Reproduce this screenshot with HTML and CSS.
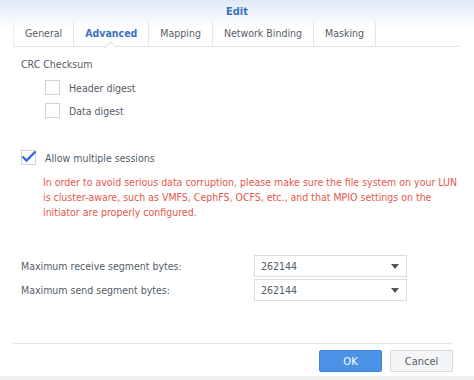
FILE: index.html
```html
<!DOCTYPE html>
<html lang="en">
<head>
    <meta charset="UTF-8">
    <title>Edit</title>
    <link rel="stylesheet" href="styles.css">
</head>
<body>
    <div class="dialog">
        <div class="header">
            <div class="title">Edit</div>
            <div class="tabs">
                <div class="tab">General</div>
                <div class="tab active">Advanced</div>
                <div class="tab">Mapping</div>
                <div class="tab">Network Binding</div>
                <div class="tab">Masking</div>
            </div>
        </div>

        <div class="content">
            <div class="section-label">CRC Checksum</div>
            <label class="check indent"><span class="box"></span>Header digest</label>
            <label class="check indent"><span class="box"></span>Data digest</label>

            <label class="check sessions">
                <span class="box checked">
                    <svg width="16" height="13" viewBox="0 0 16 13"><path d="M1.5 6.5 L5.5 10.5 L14.5 1.5" fill="none" stroke="#2f6fd0" stroke-width="2.4"/></svg>
                </span>Allow multiple sessions
            </label>
            <p class="warning">In order to avoid serious data corruption, please make sure the file system on your LUN is cluster-aware, such as VMFS, CephFS, OCFS, etc., and that MPIO settings on the initiator are properly configured.</p>

            <div class="fields">
                <div class="field">
                    <span class="field-label">Maximum receive segment bytes:</span>
                    <div class="select">262144<span class="arrow"></span></div>
                </div>
                <div class="field">
                    <span class="field-label">Maximum send segment bytes:</span>
                    <div class="select">262144<span class="arrow"></span></div>
                </div>
            </div>
        </div>

        <div class="footer">
            <button class="btn btn-ok">OK</button>
            <button class="btn btn-cancel">Cancel</button>
        </div>
    </div>
</body>
</html>
```

FILE: styles.css
```css
body {
    margin: 0;
    font-family: 'DejaVu Sans Condensed', 'DejaVu Sans', sans-serif;
    font-size: 10.5px;
    color: #535d68;
    background-color: #ffffff;
}

.dialog {
    width: 474px;
    height: 380px;
    display: flex;
    flex-direction: column;
    background-color: #fff;
    border-bottom: 4px solid #eef0f2;
    box-sizing: border-box;
}

.header {
    background: linear-gradient(#dfe9f5, #ffffff 60%);
    padding-top: 5px;
}

.title {
    text-align: center;
    color: #3b70c2;
    font-weight: bold;
    font-size: 11px;
    height: 17px;
}

.tabs {
    display: flex;
    margin: 0 14px 0 13px;
    height: 24px;
    border-bottom: 1px solid #dde3ea;
    border-left: 1px solid #e8ecf0;
}

.tab {
    position: relative;
    padding: 0 11px;
    line-height: 23px;
    border-right: 1px solid #e3e7ec;
    color: #555e68;
}

.tab.active {
    color: #3b70c2;
    font-weight: bold;
}

/* little notch under the active tab */
.tab.active::after {
    content: "";
    position: absolute;
    left: 50%;
    bottom: -1px;
    margin-left: -5px;
    width: 8px;
    height: 8px;
    background: #fff;
    border-left: 1px solid #dde3ea;
    border-top: 1px solid #dde3ea;
    transform: translateY(5px) rotate(45deg);
}

.content {
    flex: 1;
    padding: 11px 16px 0 21px;
}

.section-label {
    height: 18px;
}

.check {
    display: flex;
    align-items: center;
    height: 23px;
}

.indent {
    padding-left: 24px;
}

.box {
    width: 13px;
    height: 13px;
    border: 1px solid #cfd5db;
    background: #fff;
    margin-right: 9px;
    position: relative;
}

.box.checked svg {
    position: absolute;
    left: -1px;
    top: -1px;
}

.sessions {
    margin-top: 24px;
}

.warning {
    margin: 6px 0 0 22px;
    color: #e5574a;
    line-height: 15px;
}

.fields {
    margin-top: 34px;
}

.field {
    display: flex;
    align-items: center;
    height: 24px;
}

.field-label {
    width: 233px;
}

.select {
    width: 145px;
    height: 20px;
    border: 1px solid #d8dde2;
    padding-left: 6px;
    line-height: 20px;
    position: relative;
}

.arrow {
    position: absolute;
    right: 7px;
    top: 8px;
    border-left: 4px solid transparent;
    border-right: 4px solid transparent;
    border-top: 5px solid #555;
}

.footer {
    display: flex;
    justify-content: flex-end;
    gap: 8px;
    margin: 0 21px 0 13px;
    border-top: 1px solid #e2e6ea;
    padding: 6px 0 4px;
}

.btn {
    width: 63px;
    height: 22px;
    font-family: 'DejaVu Sans Condensed', 'DejaVu Sans', sans-serif;
    font-size: 11px;
    border-radius: 2px;
}

.btn-ok {
    background: #4a92e6;
    border: 1px solid #3d85da;
    color: #fff;
}

.btn-cancel {
    background: #f3f5f7;
    border: 1px solid #d5dae0;
    color: #555e68;
}
```
